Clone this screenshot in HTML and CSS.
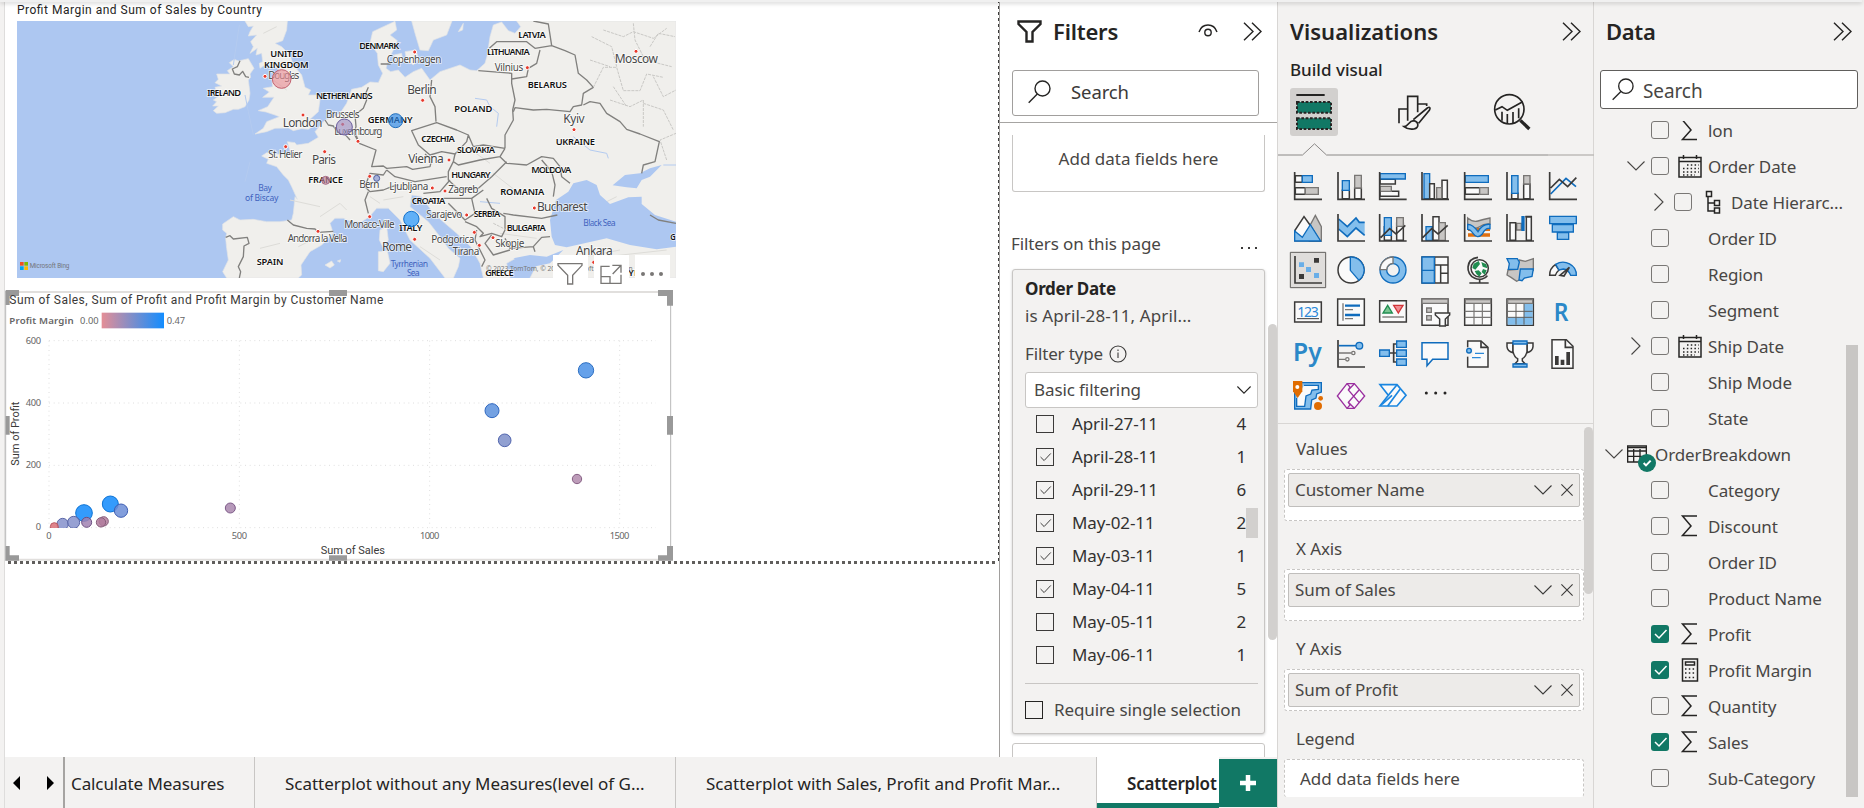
FILE: index.html
```html
<!DOCTYPE html>
<html lang="en">
<head>
<meta charset="utf-8">
<title>Report view</title>
<link rel="stylesheet" href="styles.css">
</head>
<body>
<svg class="defs" aria-hidden="true">
  <defs>
    <symbol id="chevrons" viewBox="0 0 19 19"><path d="M1 .7 10 9.5 1 18.3M9 .7 18 9.5 9 18.3"/></symbol>
    <symbol id="search" viewBox="0 0 23 24"><circle cx="14.5" cy="8.5" r="7.5"/><path d="M9.3 14 .7 22.8"/></symbol>
    <symbol id="down" viewBox="0 0 18 10"><path d="M.5.5 9 9 17.500.5"/></symbol>
    <symbol id="right" viewBox="0 0 10 18"><path d="M.5.5 9 9 .5 17.500"/></symbol>
    <symbol id="close" viewBox="0 0 12 12"><path d="M.4.4l11.200 11.200M11.600.4.4 11.600"/></symbol>
    <symbol id="sigma" viewBox="0 0 24 24"><path d="M19 2H4.500L13 12 4.500 21.500H19"/></symbol>
    <symbol id="calendar" viewBox="0 0 24 24"><path d="M1 3.500h22V23H1zM1 7.500h22M5.500 1v4M18.500 1v4"/><path class="dots" d="M9 11h12M5 14.500h16M5 18h16M5 21h12"/></symbol>
    <symbol id="hierarchy" viewBox="0 0 24 24"><path d="M5.500 1.500h5v5h-5zM13.500 10.500h5v5h-5zM13.500 18h5v5h-5zM7 7v14h6M7 13h6"/></symbol>
    <symbol id="calc" viewBox="0 0 24 24"><path d="M4.500 1h15v22h-15zM7.500 4h9v3h-9z"/><path class="dots" d="M7 11h11M7 15h11M7 19.500h11"/></symbol>
    <symbol id="tick" viewBox="0 0 18 18"><path d="M4 9l4 4 7.500-8"/></symbol>
  </defs>
</svg>
<div class="app">
  <div class="workspace">
    <div class="upper">
      <main class="canvas">
        <div class="page">
          <section class="mapvis">
            <h2><svg width="246" height="17" viewBox="0 0 246 17"><text x="0" y="12" class="vtitle dark" textLength="245">Profit Margin and Sum of Sales by Country</text></svg></h2>
            <svg class="map" width="659" height="257" viewBox="51 63 1977 771">
              <rect x="51" y="63" width="1977" height="771" fill="#adc7f1"/>
              <g fill="#f0efec" stroke="#e2e4e6" stroke-width="2">
                <path d="M650 222L690 222 682 212 700 200 688 188 703 178 715 183 745 176 762 205 750 222 752 232 745 240 750 280 747 300 735 320 715 328 700 328 675 338 650 340 640 332 655 318 638 318 650 305 640 300 658 287 672 280 650 275 645 262 665 258 645 248 655 238Z"/>
                <path d="M735 63L745 80 760 78 750 95 745 108 770 105 752 125 760 140 750 160 772 145 768 165 785 160 788 185 778 190 780 205 795 195 830 202 838 215 815 235 818 260 790 265 808 276 788 292 822 292 803 320 775 332 798 336 825 345 838 350 800 365 790 385 765 402 800 395 825 385 865 384 880 392 905 386 925 388 950 372 943 358 930 358 955 335 960 300 950 285 925 285 932 270 915 262 905 225 880 195 870 165 845 140 825 130 848 122 860 90 862 63Z"/>
                <path d="M680 834L668 815 685 780 680 745 677 715 680 700 668 690 668 672 700 650 720 660 760 658 800 665 840 665 875 660 880 640 885 590 892 598 875 560 865 540 850 525 830 500 800 490 805 478 785 468 800 458 830 462 855 465 872 460 862 425 885 428 890 435 925 430 955 412 945 395 962 375 975 360 1000 352 1020 340 1040 310 1055 268 1085 262 1110 246 1135 248 1148 220 1135 195 1132 160 1110 130 1118 95 1150 80 1185 64 1190 90 1170 105 1192 122 1180 150 1165 180 1158 205 1172 215 1195 210 1215 232 1240 215 1265 205 1290 240 1320 215 1380 195 1410 210 1430 212 1455 190 1462 165 1470 110 1480 75 1505 66 1525 92 1545 100 1562 80 1550 63 2028 63V834H1590L1610 795 1590 770 1545 776 1520 790 1530 834H1450L1440 790 1412 740 1370 700 1300 640 1265 590 1235 585 1230 620 1285 665 1320 710 1345 745 1380 775 1375 800 1360 834H1335L1290 775 1230 720 1200 660 1165 625 1130 625 1108 650 1085 665 1055 665 1030 655 1005 655 990 670 1000 700 965 735 930 755 903 795 905 825 895 834Z"/>
                <path d="M1235 63L1245 100 1260 150 1285 152 1300 120 1340 105 1356 63ZM1215 155L1248 150 1255 175 1240 195 1220 180ZM1182 165L1205 160 1208 182 1190 188ZM1375 95L1390 70 1388 90ZM1140 690L1160 680 1165 720 1150 745 1138 720ZM1135 755L1162 752 1170 790 1150 815 1135 812ZM975 795L995 783 1003 795 990 804ZM1012 783L1022 779 1020 787Z"/>
              </g>
              <g fill="none" stroke="#dddcd8" stroke-width="3">
                <path d="M895 740l60-30M780 745l60-15M870 600l90 20M960 650l60-40 20 20M1110 590l30 20M1150 600l60-10M1400 440l70 50M1480 520l90 70M1500 700l110 15M1700 780l160-30M1820 770l180-20M820 240l40 30M1790 620l60-30M1260 740l60 40M790 100l40-20"/>
              </g>
              <g fill="#adc7f1">
                <path d="M1655 710L1650 660 1668 600 1705 575 1720 550 1760 540 1790 555 1800 585 1830 612 1885 592 1925 590 1925 612 1965 645 2028 665V740L1970 748 1890 735 1820 715 1760 728 1700 742 1665 735Z"/>
                <path d="M1838 556L1875 525 1920 520 1950 505 1985 495 1950 530 1925 540 1910 565 1880 562ZM1540 775L1590 765 1640 770 1690 750 1650 790 1600 800Z"/>
              </g>
              <g class="rivers"><path d="M1425 295l35 5 10 20 25 20-5 40M1720 410l50 40 50 10 5 15M1440 605l60 5M1990 495l38 0M735 285l10 50 15 70M750 485l-15 60M718 75l-18 120"/></g>
              <g class="borders">
                <path d="M720 182L712 200 697 207 703 222 718 225 728 214 737 230 747 232M677 712L690 707 700 717 742 712 747 730 732 738 730 770 715 800 722 815 718 834M862 660L880 675 920 685 945 687 955 697 1000 694"/>
                <path d="M975 360L985 375 1000 378 1015 400 1035 403 1050 420M1105 262L1095 285 1100 300 1090 325 1065 345 1068 380 1062 400 1075 425M1068 405L1078 430 1128 450 1115 500 1150 498 1160 505 1220 500 1238 508 1290 500 1295 480 1275 462M1142 192h30M1295 240L1290 290 1305 320 1308 365M1235 392L1310 368 1370 390 1405 405 1400 425 1365 462 1325 455 1290 465 1255 435ZM1405 405L1420 440 1450 435 1515 445M1435 212L1535 220 1535 250 1545 300 1538 330 1540 360 1515 405 1515 445"/>
                <path d="M1468 145L1490 125 1580 125 1605 145 1655 137 1695 152 1725 165 1735 220 1760 240 1780 262 1750 280 1745 315 1720 320 1710 335 1640 328 1600 330 1545 323 1540 335M1620 150L1610 190 1585 205 1580 230 1535 237M1600 63L1645 72 1655 137M1750 315L1770 305 1800 310 1820 340 1860 365 1880 388 1920 402 1978 425 1965 485 1930 495 1925 520"/>
                <path d="M1515 445L1500 470 1520 490 1580 495 1625 470 1660 475 1680 500 1685 530 1710 550M1625 480L1655 515 1665 555 1660 590M1365 462L1360 485 1375 495 1440 480 1500 470M1360 485L1345 515 1345 540 1375 568 1435 565 1475 530 1520 485M1160 510L1185 530 1245 545 1340 530M1160 510L1150 525 1110 520 1095 560 1110 575 1150 570 1175 560 1195 555M1105 575L1095 600 1105 640M1270 580L1320 575 1350 540M1330 595L1415 595 1425 640 1395 660 1345 610M1415 595L1450 570M1395 665L1430 680 1450 700 1440 710 1475 700 1505 710 1515 690 1515 650 1475 625 1460 595M1510 640L1540 645 1625 655 1672 645M1475 705L1455 730 1480 765 1530 750M1430 690L1425 720 1455 780 1445 800M1515 715L1530 745 1600 740 1625 712 1650 710M1600 740L1605 755M1950 645L1975 660 2028 670"/>
                <path class="dash" d="M1480 670l50 25M1810 90l60 20 30-15 60 20 40-30M1900 70l5 50 30 60 80 20M1780 262l30-60 40 0 20 70 50 0 20-50 50 10M1850 200l-15-60-60-30M1830 300l60 20 40-20 0 80M1930 310l60 20 30 60M1770 180l60 20M1960 230l30 60 38-20M1950 140l25-40 50 10M1840 260l40 60M2000 480l-20-60 48-20"/>
              </g>
              <g fill="#e8392c" stroke="#fff" stroke-width="3">
                <circle cx="795" cy="229" r="6"/><circle cx="909" cy="345" r="6"/><circle cx="857" cy="440" r="6"/><circle cx="974" cy="455" r="6"/><circle cx="954" cy="694" r="6"/><circle cx="1028" cy="373" r="6"/><circle cx="1244" cy="156" r="6"/><circle cx="1582" cy="203" r="6"/><circle cx="1908" cy="154" r="6"/><circle cx="1268" cy="301" r="6"/><circle cx="1722" cy="389" r="6"/><circle cx="1347" cy="480" r="6"/><circle cx="1074" cy="424" r="6"/><circle cx="1109" cy="529" r="6"/><circle cx="1297" cy="564" r="6"/><circle cx="1335" cy="573" r="6"/><circle cx="1603" cy="624" r="6"/><circle cx="1400" cy="645" r="6"/><circle cx="1109" cy="650" r="6"/><circle cx="1244" cy="718" r="6"/><circle cx="1423" cy="697" r="6"/><circle cx="1438" cy="736" r="6"/><circle cx="1479" cy="713" r="6"/><circle cx="1781" cy="787" r="6"/>
              </g>
              <g class="country">
                <text x="811" y="172" textLength="100">UNITED</text><text x="792" y="203" textLength="134">KINGDOM</text><text x="622" y="288" textLength="101">IRELAND</text><text x="948" y="296" textLength="170">NETHERLANDS</text><text x="925" y="548" textLength="104">FRANCE</text><text x="770" y="794" textLength="80">SPAIN</text><text x="1078" y="147" textLength="120">DENMARK</text><text x="1555" y="114" textLength="82">LATVIA</text><text x="1461" y="166" textLength="128">LITHUANIA</text><text x="1583" y="263" textLength="118">BELARUS</text><text x="1363" y="337" textLength="114">POLAND</text><text x="1103" y="370" textLength="135">GERMANY</text><text x="1264" y="427" textLength="100">CZECHIA</text><text x="1371" y="460" textLength="114">SLOVAKIA</text><text x="1667" y="435" textLength="118">UKRAINE</text><text x="1354" y="534" textLength="118">HUNGARY</text><text x="1594" y="520" textLength="120">MOLDOVA</text><text x="1501" y="585" textLength="132">ROMANIA</text><text x="1235" y="613" textLength="101">CROATIA</text><text x="1421" y="651" textLength="80">SERBIA</text><text x="1520" y="692" textLength="117">BULGARIA</text><text x="1198" y="693" textLength="69">ITALY</text><text x="1456" y="829" textLength="85">GREECE</text><text x="2011" y="721" textLength="16" lengthAdjust="spacingAndGlyphs">G</text><text x="1885" y="829">YE</text>
              </g>
              <g class="city">
                <text x="848" y="381" textLength="119">London</text><text x="936" y="492" textLength="72">Paris</text><text x="1222" y="281" textLength="88">Berlin</text><text x="1844" y="190" textLength="130">Moscow</text><text x="1690" y="369" textLength="64">Kyiv</text><text x="1225" y="488" textLength="106">Vienna</text><text x="1611" y="632" textLength="152">Bucharest</text><text x="1146" y="752" textLength="90">Rome</text><text x="1728" y="765" textLength="110">Ankara</text>
              </g>
              <g class="town">
                <text x="805" y="236" textLength="93">Douglas</text><text x="805" y="474" textLength="102">St. Helier</text><text x="863" y="725" textLength="179">Andorra la Vella</text><text x="978" y="353" textLength="101">Brussels</text><text x="1003" y="406" textLength="144">Luxembourg</text><text x="1160" y="190" textLength="164">Copenhagen</text><text x="1484" y="212" textLength="86">Vilnius</text><text x="1078" y="563" textLength="60">Bern</text><text x="1168" y="570" textLength="117">Ljubljana</text><text x="1345" y="579" textLength="90">Zagreb</text><text x="1279" y="654" textLength="108">Sarajevo</text><text x="1033" y="683" textLength="151">Monaco-Ville</text><text x="1294" y="728" textLength="129">Podgorica</text><text x="1358" y="765" textLength="80">Tirana</text><text x="1486" y="742" textLength="87">Skopje</text>
              </g>
              <g class="sea">
                <text x="775" y="574" textLength="41">Bay</text><text x="735" y="602" textLength="100">of Biscay</text><text x="1750" y="678" textLength="97">Black Sea</text><text x="1172" y="801" textLength="112">Tyrrhenian</text><text x="1221" y="828" textLength="38">Sea</text>
              </g>
              <text class="credit" x="1458" y="812" textLength="440">© 2023 TomTom, © 2023 Microsoft Corporation</text>
              <g><rect x="60" y="786" width="11" height="11" fill="#f25022"/><rect x="73" y="786" width="11" height="11" fill="#7fba00"/><rect x="60" y="799" width="11" height="11" fill="#00a4ef"/><rect x="73" y="799" width="11" height="11" fill="#ffb900"/></g>
              <text class="bing" x="89" y="805" textLength="119">Microsoft Bing</text>
              <g stroke-width="3" fill-opacity=".65">
                <circle cx="845" cy="237" r="28" fill="#e99098" stroke="#c26270"/><circle cx="1033" cy="381" r="24" fill="#9c8fc3" stroke="#6c5e9e"/><circle cx="977" cy="541" r="12" fill="#bd7f99" stroke="#a36882"/><circle cx="1187" cy="362" r="21" fill="#2684e6" stroke="#1e6dbd"/><circle cx="1130" cy="535" r="9" fill="#8090d0" stroke="#5061a3"/><circle cx="1234" cy="657" r="23" fill="#138dff" stroke="#1572cb"/>
              </g>
            </svg>
            <div class="vis-tools">
              <span><svg width="35" height="32" viewBox="0 0 105 96"><path d="M15 26H87V31L59 61V87H44V61L15 31Z"/></svg></span>
              <span><svg width="35" height="32" viewBox="0 0 105 96"><path d="M47 34H21V85H81V59M21 65H48V85M55 31H81V53M81 31 56 57"/></svg></span>
              <span><svg width="35" height="32" viewBox="0 0 105 96"><g class="tdots"><circle cx="24" cy="57" r="6"/><circle cx="51" cy="57" r="6"/><circle cx="78" cy="57" r="6"/></g></svg></span>
            </div>
          </section>
          <section class="scatter">
            <svg width="668" height="272" viewBox="15 30 2004 816">
              <defs><linearGradient id="ramp"><stop offset="0" stop-color="#e58e96"/><stop offset="1" stop-color="#138dff"/></linearGradient></defs>
              <path d="M16 36H2013M16 839H2013" stroke="#e1dfdd" stroke-width="6" fill="none"/>
              <path d="M17 33V842M2012 33V842" stroke="#b9b9b9" stroke-width="3" fill="none"/>
              <g fill="#999">
                <path d="M17 30H57V48H29V75H17ZM987 30H1041V48H987ZM1974 30H2019V77H2001V48H1974ZM17 408H29V464H17ZM2001 408H2019V464H2001ZM17 798H29V826H57V842H17ZM987 826H1041V842H987ZM2001 798H2019V842H1974V826H2001Z"/>
              </g>
              <text class="vtitle big" x="28" y="73" textLength="1122">Sum of Sales, Sum of Profit and Profit Margin by Customer Name</text>
              <text class="lbl bold" x="28" y="132" textLength="193">Profit Margin</text>
              <text class="lbl" x="240" y="132" textLength="56">0.00</text>
              <rect x="305" y="98" width="187" height="47" fill="url(#ramp)"/>
              <text class="lbl" x="500" y="132" textLength="55">0.47</text>
              <g stroke="#dedede" stroke-width="3" stroke-dasharray="3 11" fill="none">
                <path d="M147 182H1968M147 369H1968M147 556H1968M147 743H1968M147 182V743M718 182V743M1289 182V743M1859 182V743"/>
              </g>
              <g class="lbl">
                <text x="77" y="192" textLength="46">600</text><text x="77" y="378" textLength="46">400</text><text x="77" y="564" textLength="46">200</text><text x="107" y="750">0</text>
                <text x="139" y="777">0</text><text x="695" y="777" textLength="46">500</text><text x="1260" y="777" textLength="58">1000</text><text x="1829" y="777" textLength="59">1500</text>
              </g>
              <text class="axis" x="962" y="822" textLength="193">Sum of Sales</text>
              <text class="axis" transform="translate(57 557) rotate(-90)" textLength="192">Sum of Profit</text>
              <clipPath id="plot"><rect x="147" y="160" width="1830" height="584"/></clipPath>
              <g stroke-width="3" fill-opacity=".85" clip-path="url(#plot)">
                <circle cx="1758" cy="271" r="23" fill="#4a90e6" stroke="#2b6ec2"/><circle cx="1476" cy="392" r="21" fill="#5a90dd" stroke="#2f67c0"/><circle cx="1514" cy="481" r="19" fill="#7e8fc9" stroke="#5165ad"/><circle cx="1731" cy="597" r="14" fill="#b18bad" stroke="#865f84"/>
                <circle cx="691" cy="684" r="15" fill="#a987ae" stroke="#7d5a88"/><circle cx="331" cy="672" r="24" fill="#1189fb" stroke="#0e73d4"/><circle cx="363" cy="692" r="20" fill="#6c8dd6" stroke="#3f5fb2"/><circle cx="252" cy="699" r="25" fill="#1189fb" stroke="#0e73d4"/><circle cx="188" cy="732" r="17" fill="#8590cb" stroke="#5966a8"/><circle cx="221" cy="727" r="18" fill="#8590cb" stroke="#5966a8"/><circle cx="260" cy="727" r="15" fill="#a183b1" stroke="#6d4f82"/><circle cx="311" cy="724" r="14" fill="#b5809f" stroke="#875e7b"/><circle cx="303" cy="727" r="14" fill="#b27d9e" stroke="#875e7b"/><circle cx="163" cy="740" r="12" fill="#d96f78" stroke="#ba5863"/>
              </g>
            </svg>
          </section>
        </div>
      </main>

      <aside class="filters">
        <header class="fhead">
          <svg width="25" height="23" viewBox="0 0 25 23"><path class="ink2" d="M1.500 1.500H23.500V4L15.500 12V21.500H9.500V12L1.500 4Z"/></svg>
          <h1>Filters</h1>
          <svg class="eye ink" width="20" height="13" viewBox="0 0 20 13"><path d="M1 8C2.500 3.500 6 1 10 1S17.500 3.500 19 8"/><circle cx="10" cy="8.500" r="3.200"/></svg>
          <svg class="ink" width="19" height="19"><use href="#chevrons"/></svg>
        </header>
        <div class="fsearch"><svg class="ink" width="23" height="24"><use href="#search"/></svg><span>Search</span></div>
        <div class="fbody">
          <div class="addbox">Add data fields here</div>
          <div class="fsection"><span>Filters on this page</span><i class="more3"></i></div>
          <div class="card">
            <b class="cname">Order Date</b>
            <div class="csum">is April-28-11, April...</div>
            <div class="ctype"><span>Filter type</span><svg width="18" height="18" viewBox="0 0 18 18"><circle cx="9" cy="9" r="8"/><path d="M9 7.500V13M9 4.500V6"/></svg></div>
            <div class="select"><span>Basic filtering</span><svg class="ink" width="14" height="8"><use href="#down"/></svg></div>
            <div class="options">
              <div class="opt"><i class="box"></i><span>April-27-11</span><em>4</em></div>
              <div class="opt"><i class="box"><svg width="16" height="16"><use href="#tick"/></svg></i><span>April-28-11</span><em>1</em></div>
              <div class="opt"><i class="box"><svg width="16" height="16"><use href="#tick"/></svg></i><span>April-29-11</span><em>6</em></div>
              <div class="opt"><i class="box"><svg width="16" height="16"><use href="#tick"/></svg></i><span>May-02-11</span><em>2</em></div>
              <div class="opt"><i class="box"><svg width="16" height="16"><use href="#tick"/></svg></i><span>May-03-11</span><em>1</em></div>
              <div class="opt"><i class="box"><svg width="16" height="16"><use href="#tick"/></svg></i><span>May-04-11</span><em>5</em></div>
              <div class="opt"><i class="box"></i><span>May-05-11</span><em>2</em></div>
              <div class="opt"><i class="box"></i><span>May-06-11</span><em>1</em></div>
              <div class="optthumb"></div>
            </div>
            <div class="single"><i class="box strong"></i><span>Require single selection</span></div>
          </div>
          <div class="nextcard"></div>
          <div class="fthumb"></div>
        </div>
      </aside>
    </div>
    <nav class="tabs">
      <div class="arrows"><svg width="59" height="20" viewBox="0 0 59 20"><path d="M15 3V17L8 10ZM42 3V17L49 10Z"/></svg></div>
      <div class="tab t1">Calculate Measures</div>
      <div class="tab t2">Scatterplot without any Measures(level of G...</div>
      <div class="tab t3">Scatterplot with Sales, Profit and Profit Mar...</div>
      <div class="tab active">Scatterplot</div>
      <div class="plus"><svg width="18" height="18" viewBox="0 0 18 18"><path d="M9 1V17M1 9H17"/></svg></div>
    </nav>
  </div>

  <aside class="viz">
    <header class="vhead"><h1>Visualizations</h1><svg class="ink" width="19" height="19"><use href="#chevrons"/></svg></header>
    <h3>Build visual</h3>
    <div class="modes">
      <div class="mode on"><svg width="48" height="48" viewBox="42 264 144 144"><path d="M61 285H146" stroke="#252423" stroke-width="6"/><g fill="#117865" stroke="#252423" stroke-width="6"><path d="M63 306H165V338H63ZM63 355H165V387H63Z" stroke="#d2d0ce"/><path d="M63 306H165V338H63ZM63 355H165V387H63Z" stroke-dasharray="8 5"/></g></svg></div>
      <div class="mode"><svg width="48" height="48" viewBox="340 264 144 144" fill="none" stroke="#252423" stroke-width="5"><path d="M370 370V327H396M396 362V289H426V337M426 312H453V318M385 380C398 380 398 363 414 362 430 365 431 384 415 387 400 389 391 385 385 380ZM413 359 455 324C463 319 465 324 461 331L429 370"/></svg></div>
      <div class="mode"><svg width="48" height="48" viewBox="636 264 144 144" fill="none" stroke="#252423" stroke-width="5"><circle cx="700" cy="328" r="44"/><path d="M658 330 678 320 694 331 740 305M678 335V362M694 342V370M711 336V370M728 325V355"/><path d="M733 361 760 387" stroke-width="10"/></svg></div>
    </div>
    <svg class="notch" width="316" height="14" viewBox="0 0 316 14"><path d="M0 12H24.500L36.500 .8 48.500 12H270" stroke="#8a8886"/><path d="M270 12H316" stroke="#bebbb8" stroke-width="1.600"/></svg>
    <div class="gallery">
      <svg viewBox="54 36 84 84"><path class="w" d="M58 47H79V67H58ZM58 83H88V103H58Z"/><path class="b" d="M79 47H109V67H79Z"/><path class="g" d="M88 83H127V103H88Z"/><path class="k" d="M56 36V118H138"/></svg>
      <svg viewBox="183 36 84 84"><path class="w" d="M199 91H220V116H199ZM236 84H256V116H236Z"/><path class="b" d="M199 62H220V91H199Z"/><path class="g" d="M236 46H256V84H236Z"/><path class="k" d="M186 36V118H267"/></svg>
      <svg viewBox="309 36 84 84"><path class="w" d="M312 58H358V72H312ZM312 94H368V109H312Z"/><path class="g" d="M312 79H346V94H312Z"/><path class="b" d="M312 41H388V57H312Z"/><path class="k" d="M311 36V118H392"/></svg>
      <svg viewBox="435 36 84 84"><path class="b" d="M444 41H461V116H444Z"/><path class="w" d="M461 71H475V116H461ZM498 61H514V116H498Z"/><path class="g" d="M482 83H497V116H482Z"/><path class="k" d="M438 36V118H519"/></svg>
      <svg viewBox="564 36 84 84"><path class="w" d="M568 83H611V103H568Z"/><path class="b" d="M568 47H637V67H568Z"/><path class="g" d="M611 83H637V103H611Z"/><path class="k" d="M566 36V118H648"/></svg>
      <svg viewBox="690 36 84 84"><path class="w" d="M707 100H726V116H707ZM743 72H762V116H743Z"/><path class="b" d="M707 47H726V100H707Z"/><path class="g" d="M743 47H762V72H743Z"/><path class="k" d="M693 36V118H774"/></svg>
      <svg viewBox="819 36 84 84"><path class="bl" d="M824 102 870 55 900 80"/><path class="k" d="M824 84 850 58 875 80 901 53M821 36V118H903"/></svg>

      <svg viewBox="54 162 84 84"><path class="g" d="M118 166 136 200V243H100V200Z"/><path class="w" d="M84 170 57 211V242H131L102 195Z"/><path class="b" d="M56 213 79 232 103 194 134 243H56Z"/></svg>
      <svg viewBox="183 162 84 84"><path d="M188 177 214 200 240 174 250 187H266V224L240 204 214 230 188 207Z" fill="#83beec"/><path class="bl" d="M188 177 214 200 240 174 250 187H266M188 207 214 230 240 204 266 226"/><path class="k" d="M186 162V243H267"/></svg>
      <svg viewBox="309 162 84 84"><path class="w" d="M325 200H346V241H325ZM362 190H382V241H362Z"/><path class="b" d="M325 173H346V226H325Z"/><path class="g" d="M362 173H382V199H362Z"/><path class="k" d="M311 162V243H392M314 233 341 206 360 222 388 196"/></svg>
      <svg viewBox="435 162 84 84"><path class="b" d="M450 200H469V241H450Z"/><path class="w" d="M471 170H489V241H471Z"/><path class="g" d="M489 188H508V241H489Z"/><path class="k" d="M438 162V243H519M440 233 467 206 486 222 515 196"/></svg>
      <svg viewBox="564 162 84 84"><path d="M576 208H642M576 225H642" stroke="#e07010" stroke-width="10"/><path class="g" d="M575 174Q592 188 606 183T642 174V192Q625 190 609 201T575 192Z"/><path class="b" d="M575 193Q590 192 606 215 620 190 642 193V206Q629 202 619 222 604 239 591 220 583 208 575 208Z"/><path class="k" d="M566 162V243H648"/></svg>
      <svg viewBox="690 162 84 84"><path class="g" d="M722 190H736V210H722Z"/><path class="w" d="M702 188H719V241H702ZM751 170H766V241H751Z"/><path d="M736 168H746V213H736Z" fill="#0f6cbd"/><path class="k" d="M748 170H768M693 162V243H774"/></svg>
      <svg viewBox="819 162 84 84"><path class="b" d="M821 169H901V191H821ZM829 194H892V216H829ZM844 218H878V238H844Z"/></svg>

      <svg class="picked" viewBox="54 288 84 84"><path d="M43 277H149V383H43Z" fill="#dfdddb" stroke="#605e5c" stroke-width="3"/><path class="k" d="M57 288V369H138"/><path fill="#3b3a39" d="M114 294H129V308H114ZM69 342H84V357H69Z"/><path fill="#69aee8" d="M69 307H84V321H69ZM90 321H105V336H90ZM114 339H129V354H114Z"/></svg>
      <svg viewBox="183 288 84 84"><circle class="w" cx="225" cy="330" r="39"/><path class="b" d="M223 291A39 39 0 0 1 249 361L223 331Z"/></svg>
      <svg viewBox="309 288 84 84"><circle cx="351" cy="330" r="29" fill="none" stroke="#0f6cbd" stroke-width="24"/><circle cx="351" cy="330" r="29" fill="none" stroke="#83beec" stroke-width="16"/><path d="M312 329A39 39 0 0 1 351 291V310A20 20 0 0 0 332 329Z" fill="#fafafa" stroke="#797775" stroke-width="4"/></svg>
      <svg viewBox="435 288 84 84"><path class="w" d="M438 291H516V369H438ZM476 291V369M476 315H516M494 315V369M494 340H516"/><path class="b" d="M438 291H475V369H438ZM438 331H475"/></svg>
      <svg viewBox="564 288 84 84"><circle class="w" cx="611" cy="325" r="26"/><path fill="#218d51" d="M593 311 608 303 612 312 598 329 589 324ZM616 306 631 313 634 325 620 320ZM596 333 608 331 617 340 610 350 601 342ZM621 327 632 331 626 344 617 336Z"/><path class="k" d="M606 292C568 296 568 343 595 354 611 362 629 356 634 347M611 359V367M580 369H638"/></svg>
      <svg viewBox="690 288 84 84"><path class="g" d="M730 300 748 304 772 296V331L752 350 730 360 722 364 705 352 693 345 696 330 722 328Z"/><path class="b" d="M693 296H724L730 306 725 328H697L700 311ZM733 327H772L768 349 745 354 738 362 729 360Z"/></svg>
      <svg viewBox="819 288 84 84"><path class="w" d="M821 346A40 38 0 0 1 838 314L849 330Q840 338 838 346Z"/><path class="b" d="M839 313A40 38 0 0 1 901 346H884Q877 328 862 327L849 330Z"/><path d="M852 346 880 322 864 348Z" class="k"/></svg>

      <svg viewBox="54 414 84 84"><path class="w" d="M56 426H136V486H56Z"/><text x="64" y="470" textLength="64" class="num">123</text><path d="M63 476H129" stroke="#3b3a39" stroke-width="3"/></svg>
      <svg viewBox="183 414 84 84"><path class="w" d="M185 417H265V496H185Z"/><path d="M201 430V482M207 449H231M207 476H231" stroke="#797775" stroke-width="4"/><path d="M207 437H252M207 465H252" stroke="#0f6cbd" stroke-width="7"/></svg>
      <svg viewBox="309 414 84 84"><path class="w" d="M311 422H391V486H311Z"/><path d="M335 436 349 459H321Z" fill="#7ac591" stroke="#218d51" stroke-width="4"/><path d="M353 436H381L367 459Z" fill="#f08c92" stroke="#d13438" stroke-width="4"/><path d="M319 471H384" stroke="#797775" stroke-width="4"/></svg>
      <svg viewBox="435 414 84 84"><path class="w" d="M438 417H516V496H438Z"/><path class="g" d="M438 417H516V430H438ZM452 444H466V457H452ZM452 467H466V480H452Z"/><path class="w" d="M478 459H521V465L508 477V498H491V477L478 465Z"/></svg>
      <svg viewBox="564 414 84 84"><path class="w" d="M566 417H646V496H566Z"/><path d="M566 454H646M566 472H646M594 431V496M619 431V496" fill="none" stroke="#797775" stroke-width="3.500"/><path class="g" d="M568 419H644V430H568Z"/></svg>
      <svg viewBox="690 414 84 84"><path class="w" d="M693 417H772V496H693Z"/><path fill="#83beec" d="M744 431H770V494H695V472H744Z"/><path d="M695 454H770M695 472H770M720 431V494M744 431V494" fill="none" stroke="#605e5c" stroke-width="3"/><path class="g" d="M695 419H770V430H695Z"/></svg>
      <svg viewBox="819 414 84 84"><text class="rp" x="833" y="482" textLength="44" lengthAdjust="spacingAndGlyphs">R</text></svg>

      <svg viewBox="54 540 84 84"><text class="rp" x="51" y="603" textLength="86" lengthAdjust="spacingAndGlyphs">Py</text></svg>
      <svg viewBox="183 540 84 84"><path class="k" d="M186 540V621H267"/><path d="M189 557H240" stroke="#0f6cbd" stroke-width="5"/><circle class="b" cx="250" cy="557" r="10"/><g fill="#fafafa" stroke="#797775" stroke-width="4"><path d="M189 579H226M189 598H208"/><circle cx="232" cy="579" r="5"/><circle cx="214" cy="598" r="5"/></g></svg>
      <svg viewBox="309 540 84 84"><path class="k" d="M342 579H362M362 552H353V606H362"/><path class="b" d="M311 570H340V589H311ZM362 543H391V562H362ZM362 570H391V589H362ZM362 597H391V616H362Z"/></svg>
      <svg viewBox="435 540 84 84"><path class="bubble" d="M438 548H516V598H470L453 617V598H438Z"/></svg>
      <svg viewBox="564 540 84 84"><path class="w" d="M575 543H615L636 562V621H575Z"/><path class="k" d="M615 543V562H636"/><path d="M568 562H590V590H568Z" fill="#f3f2f1"/><circle class="b" cx="579" cy="572" r="7"/><path d="M597 580H624M588 593H614" stroke="#2b88d8" stroke-width="4"/></svg>
      <svg viewBox="690 540 84 84"><path class="w" d="M711 549H693V560Q694 574 711 578ZM753 549H771V560Q770 574 753 578Z"/><path class="w" d="M711 548H753V575Q749 592 739 596V603L747 611H717L725 603V596Q715 592 711 575Z"/><path class="b" d="M711 543H753V552H711ZM711 612H753V621H711Z"/></svg>
      <svg viewBox="819 540 84 84"><path class="w" d="M828 539H871L891 559V625H828Z"/><path class="k" d="M868 540V562H891"/><path fill="#3b3a39" d="M837 588H848V615H837ZM854 599H865V615H854ZM871 576H882V615H871Z"/></svg>

      <svg viewBox="54 666 84 84"><path class="b" d="M56 668H136V696L122 702 120 714 107 720 104 747H56Z"/><path d="M84 676H127V688L108 690 104 702 90 708 86 739H62V714" fill="#fafafa" stroke="#0f6cbd" stroke-width="4"/><path d="M51 663H79V694L65 714 51 694Z" fill="#e06c00"/><circle cx="64" cy="681" r="6" fill="#fff"/><circle cx="126" cy="738" r="18" fill="#f3f2f1"/><circle cx="126" cy="738" r="12" fill="#e06c00"/><circle cx="134" cy="715" r="7" fill="#e06c00"/></svg>
      <svg viewBox="183 666 84 84" fill="#fafafa" stroke="#9a2f9f" stroke-width="4"><path d="M213 671H235L266 708 235 745H213L184 708Z"/><path fill="none" d="M213 671 222 681 217 690 249 727M235 671 217 690M249 690 217 727 222 735 213 745M217 727 235 745"/></svg>
      <svg viewBox="309 666 84 84" fill="#fafafa" stroke="#1a86e0" stroke-width="5"><path d="M312 674H363L390 706 363 738H312L337 706Z"/><path d="M337 706 363 674M318 733 348 706M335 738 372 688" fill="none"/></svg>
      <svg viewBox="435 666 84 84"><g fill="#252423"><circle cx="451" cy="699" r="4.500"/><circle cx="479" cy="699" r="4.500"/><circle cx="507" cy="699" r="4.500"/></g></svg>
    </div>
    <div class="wells">
      <h4>Values</h4>
      <div class="well"><div class="pill"><span>Customer Name</span><svg width="18" height="10"><use href="#down"/></svg><svg width="12" height="12"><use href="#close"/></svg></div></div>
      <h4>X Axis</h4>
      <div class="well"><div class="pill"><span>Sum of Sales</span><svg width="18" height="10"><use href="#down"/></svg><svg width="12" height="12"><use href="#close"/></svg></div></div>
      <h4>Y Axis</h4>
      <div class="well short"><div class="pill"><span>Sum of Profit</span><svg width="18" height="10"><use href="#down"/></svg><svg width="12" height="12"><use href="#close"/></svg></div></div>
      <h4 class="leg">Legend</h4>
      <div class="well open">Add data fields here</div>
      <div class="vthumb"></div>
    </div>
  </aside>

  <aside class="data">
    <header class="dhead"><h1>Data</h1><svg class="ink" width="19" height="19"><use href="#chevrons"/></svg></header>
    <div class="dsearch"><svg class="ink" width="22" height="23"><use href="#search"/></svg><span>Search</span></div>
    <div class="tree">
      <div class="row"><i class="exp"></i><i class="cb"></i><svg class="ic clipped"><use href="#sigma"/></svg><span>lon</span></div>
      <div class="row"><i class="exp"><svg width="18" height="10"><use href="#down"/></svg></i><i class="cb"></i><svg class="ic"><use href="#calendar"/></svg><span>Order Date</span></div>
      <div class="row sub"><i class="exp"><svg width="10" height="18"><use href="#right"/></svg></i><i class="cb"></i><svg class="ic"><use href="#hierarchy"/></svg><span>Date Hierarc...</span></div>
      <div class="row"><i class="exp"></i><i class="cb"></i><i class="ic"></i><span>Order ID</span></div>
      <div class="row"><i class="exp"></i><i class="cb"></i><i class="ic"></i><span>Region</span></div>
      <div class="row"><i class="exp"></i><i class="cb"></i><i class="ic"></i><span>Segment</span></div>
      <div class="row"><i class="exp"><svg width="10" height="18"><use href="#right"/></svg></i><i class="cb"></i><svg class="ic"><use href="#calendar"/></svg><span>Ship Date</span></div>
      <div class="row"><i class="exp"></i><i class="cb"></i><i class="ic"></i><span>Ship Mode</span></div>
      <div class="row"><i class="exp"></i><i class="cb"></i><i class="ic"></i><span>State</span></div>
      <div class="row table"><svg width="18" height="10"><use href="#down"/></svg><svg class="ticon" width="30" height="27" viewBox="0 0 90 81"><path d="M2 3H58V51H2ZM2 8H58M2 18H58M2 34H58M20 12V51M39 12V51" fill="none" stroke="#252423" stroke-width="4"/><circle cx="60" cy="54" r="27" fill="#117865"/><path d="M50 54 57 61 71 47" fill="none" stroke="#fff" stroke-width="6"/></svg><span>OrderBreakdown</span></div>
      <div class="row"><i class="exp"></i><i class="cb"></i><i class="ic"></i><span>Category</span></div>
      <div class="row"><i class="exp"></i><i class="cb"></i><svg class="ic"><use href="#sigma"/></svg><span>Discount</span></div>
      <div class="row"><i class="exp"></i><i class="cb"></i><i class="ic"></i><span>Order ID</span></div>
      <div class="row"><i class="exp"></i><i class="cb"></i><i class="ic"></i><span>Product Name</span></div>
      <div class="row"><i class="exp"></i><i class="cb on"><svg width="18" height="18"><use href="#tick"/></svg></i><svg class="ic"><use href="#sigma"/></svg><span>Profit</span></div>
      <div class="row"><i class="exp"></i><i class="cb on"><svg width="18" height="18"><use href="#tick"/></svg></i><svg class="ic"><use href="#calc"/></svg><span>Profit Margin</span></div>
      <div class="row"><i class="exp"></i><i class="cb"></i><svg class="ic"><use href="#sigma"/></svg><span>Quantity</span></div>
      <div class="row"><i class="exp"></i><i class="cb on"><svg width="18" height="18"><use href="#tick"/></svg></i><svg class="ic"><use href="#sigma"/></svg><span>Sales</span></div>
      <div class="row"><i class="exp"></i><i class="cb"></i><i class="ic"></i><span>Sub-Category</span></div>
      <div class="dthumb"></div>
    </div>
  </aside>
  <div class="topshade"></div>
</div>
</body>
</html>
```
FILE: styles.css
```css
* { box-sizing: border-box; }
body { margin: 0; font: 17px/24px "Noto Sans", "Open Sans", sans-serif; color: #484644; letter-spacing: -.1px; }
h1, h2, h3, h4 { margin: 0; font-weight: 600; color: #252423; }
i, em { font-style: normal; }
svg { display: block; flex: none; }
svg text { letter-spacing: 0; }
.defs { position: absolute; width: 0; height: 0; }
.app { position: relative; display: flex; width: 1864px; height: 808px; overflow: hidden; background: #f3f2f1; }
.topshade { position: absolute; left: 0; top: 0; width: 1862px; height: 2px; background: #f0f0f0; box-shadow: 0 1px 4px rgba(0,0,0,.28); }
.ink { fill: none; stroke: #252423; stroke-width: 1.4; }
.ink2 { fill: none; stroke: #252423; stroke-width: 2.4; }

.workspace { width: 1277px; display: flex; flex-direction: column; }
.upper { display: flex; height: 757px; }
.canvas { width: 999px; padding-left: 4px; background: #fff; border-left: 4px solid #f3f2f1; box-shadow: inset 1px 0 #dedddc; }
.page { height: 565px; padding: 2px 0 0 0; width: 991px; background:
  repeating-linear-gradient(90deg, #605e5c 0 3px, transparent 3px 6px) 0 561px / 990px 3px no-repeat,
  repeating-linear-gradient(#3b3a39 0 3px, transparent 3px 6px) 990px 0 / 1px 564px no-repeat; }
.mapvis { position: relative; padding-left: 9px; height: 288px; }
.mapvis h2 { height: 19px; }
.vtitle { font: 12px Roboto, sans-serif; fill: #3b3a39; }
.vtitle.dark { fill: #252423; }
.vtitle.big { font-size: 36px; }
.map { overflow: hidden; }
.borders { fill: none; stroke: #81807e; stroke-width: 4; stroke-linejoin: round; }
.borders .dash { stroke: #c9c8c5; stroke-width: 3; stroke-dasharray: 9 3; }
.rivers { fill: none; stroke: #b4cbf0; stroke-width: 3; }
.country, .city, .town, .sea { paint-order: stroke; stroke: #fff; stroke-opacity: .7; stroke-width: 5; }
.country { font: 600 28px "Noto Sans", sans-serif; fill: #111; }
.city { font: 36px "Noto Sans", sans-serif; fill: #484848; }
.town { font: 30px "Noto Sans", sans-serif; fill: #484848; }
.sea { font: 26px "Noto Sans", sans-serif; fill: #3f62bd; stroke: #adc7f1; }
.credit { font: 20px "Noto Sans", sans-serif; fill: #777; }
.bing { font: 19px Roboto, sans-serif; fill: #72757c; }
.vis-tools { position: absolute; left: 545px; top: 253px; display: flex; gap: 6px; }
.vis-tools span { background: linear-gradient(#fff, #fff) 0 0 / 35px 23px no-repeat; }
.vis-tools path { fill: none; stroke: #797775; stroke-width: 4; }
.tdots { fill: #797775; }
.scatter { margin-left: -3px; }
.lbl { font: 28px "Noto Sans", sans-serif; fill: #666; }
.lbl.bold { font-size: 29px; font-weight: 600; }
.axis { font: 33px Roboto, sans-serif; fill: #3b3a39; }

.filters { width: 278px; background: #fff; border-left: 1px solid #a19f9d; padding: 0 0 0 12px; overflow: hidden; }
.fhead { display: flex; align-items: center; height: 62px; padding: 0 15px 0 5px; }
.fhead h1 { margin-left: 11px; flex: 1; letter-spacing: -.2px; }
h1 { font-size: 22px; letter-spacing: -.3px; }
.eye { margin-right: 25px; margin-top: -2px; }
.fsearch { display: flex; align-items: center; width: 247px; height: 46px; margin-top: 8px; padding: 0 0 2px 15px; gap: 20px; border: 1px solid #a19f9d; border-radius: 3px; color: #3b3a39; font-size: 18.5px; }
.fbody { position: relative; margin: 6px 0 0 -12px; padding: 12px 0 0 12px; height: 635px; border-top: 1px solid #a6a4a2; }
.addbox { width: 253px; height: 57px; border: 1px solid #c8c6c4; border-top: 0; border-radius: 0 0 3px 3px; padding-top: 12px; text-align: center; letter-spacing: 0; }
.fsection { display: flex; justify-content: space-between; align-items: center; height: 24px; margin: 40px 19px 0 -1px; }
.more3 { width: 17px; height: 2px; margin-top: 8px; background: repeating-linear-gradient(90deg, #3b3a39 0 2px, transparent 2px 7px); }
.card { width: 253px; height: 465px; margin-top: 13px; padding: 7px 6px 0 12px; background: #f3f2f1; border: 1px solid #c8c6c4; border-radius: 3px; box-shadow: 0 1px 3px rgba(0,0,0,.2); }
.cname { display: block; color: #252423; font-weight: 700; letter-spacing: -.3px; }
.csum { margin-top: 3px; letter-spacing: .12px; }
.ctype { display: flex; align-items: center; gap: 6px; margin-top: 13px; height: 25px; letter-spacing: -.15px; }
.ctype svg { fill: none; stroke: #3b3a39; stroke-width: 1.1; }
.select { display: flex; align-items: center; justify-content: space-between; height: 36px; margin-top: 6px; padding: 0 6px 0 8px; background: #fff; border: 1px solid #c8c6c4; border-radius: 3px; }
.options { position: relative; top: -1px; height: 277px; padding-left: 11px; border-bottom: 1px solid #c8c6c4; }
.opt { display: flex; align-items: center; height: 33px; padding-right: 12px; }
.opt span { flex: 1; margin-left: 18px; }
.opt span, .opt em { color: #323130; }
.box { width: 18px; height: 18px; border: 1px solid #3b3a39; flex: none; }
.box svg { fill: none; stroke: #3b3a39; stroke-width: 1.1; }
.box.strong { border-width: 1.500px; border-color: #252423; }
.optthumb { position: absolute; right: 0; top: 101px; width: 12px; height: 30px; background: #d2d0ce; }
.single { display: flex; align-items: center; height: 49px; gap: 11px; }
.nextcard { width: 253px; height: 30px; margin-top: 9px; border: 1px solid #c8c6c4; border-radius: 3px; }
.fthumb { position: absolute; right: 0; top: 201px; width: 9px; height: 316px; border-radius: 5px; background: #d2d0ce; }

.tabs { position: relative; display: flex; height: 51px; margin-left: 4px; width: 1273px; background: #f3f2f1; color: #252423; line-height: 53px; white-space: nowrap; border-left: 1px solid #dedddc; }
.arrows { width: 60px; padding-top: 16px; border-right: 2px solid #a6a4a2; }
.tab { border-right: 1px solid #c8c6c4; overflow: hidden; }
.t1 { width: 190px; padding-left: 6px; }
.t2 { width: 421px; padding-left: 30px; letter-spacing: -.02px; }
.t3 { width: 421px; padding-left: 30px; letter-spacing: 0; }
.active { width: 122px; padding-left: 30px; border-right: 0; background: #fff; border-bottom: 5px solid #117865; font-weight: 600; letter-spacing: -.2px; }
.plus { display: grid; place-items: center; width: 58px; height: 48px; margin-top: 2px; background: #117865; }
.plus path { stroke: #fff; stroke-width: 4.500; }

.viz { width: 317px; border-left: 1px solid #d8d6d4; border-right: 1px solid #d8d6d4; }
.vhead, .dhead { display: flex; align-items: center; justify-content: space-between; height: 62px; padding: 0 12px; }
.vhead h1 { letter-spacing: .05px; }
h3 { margin: -4px 0 0 12px; font-size: 17px; line-height: 24px; font-weight: 500; letter-spacing: 0; }
.modes { display: flex; margin: 6px 0 0 12px; gap: 51px; }
.mode { border-radius: 3px; }
.mode.on { background: #d2d0ce; }
.notch { margin-top: 7px; fill: none; }
.gallery { display: grid; grid-template-columns: 43px 42px 42px 43px 42px 43px 28px; grid-auto-rows: 28px; row-gap: 14px; height: 267px; padding: 15px 0 0 16px; border-bottom: 1px solid #d8d6d4; }
.gallery svg { width: 28px; height: 28px; overflow: visible; }
.k { fill: none; stroke: #3b3a39; stroke-width: 5; }
.w { fill: #fafafa; stroke: #3b3a39; stroke-width: 4.500; }
.g { fill: #c8c6c4; stroke: #797775; stroke-width: 4; }
.b { fill: #83beec; stroke: #0f6cbd; stroke-width: 4; }
.bl { fill: none; stroke: #0f6cbd; stroke-width: 5; }
.bubble { fill: #fafafa; stroke: #0f6cbd; stroke-width: 4.500; }
.num { font: 42px "Noto Sans", sans-serif; fill: #2b88d8; }
.rp { font: 600 74px "Noto Sans", sans-serif; fill: #2b88c8; }
.wells { position: relative; height: 373px; padding: 13px 9px 0 6px; overflow: hidden; }
h4 { height: 24px; margin-left: 12px; font-size: 17px; font-weight: 400; color: #484644; }
.well { height: 52px; margin: 8px 0 16px; padding: 3px; background: #fff; border: 1px dashed #c8c6c4; border-radius: 3px; }
.well.short { height: 42px; margin-bottom: 16px; }
.well.open { height: 38px; border-bottom: 0; padding: 7px 0 0 15px; margin-bottom: 0; letter-spacing: 0; }
.pill { display: flex; align-items: center; height: 34px; padding: 0 6px; background: #edebe9; border: 1px solid #c0bebc; border-radius: 2px; }
.pill span { flex: 1; }
.pill svg { margin-left: 9px; fill: none; stroke: #3b3a39; stroke-width: 1.1; }
.vthumb { position: absolute; right: 0; top: 3px; width: 9px; height: 167px; border-radius: 5px; background: #d2d0ce; }

.data { width: 270px; }
.dhead { padding: 0 12px 0 12px; }
.dsearch { display: flex; align-items: center; width: 258px; height: 39px; margin: 8px 0 0 6px; padding-left: 11px; gap: 9px; background: #fff; border: 1px solid #605e5c; border-radius: 3px; font-size: 19px; }
.dsearch span { padding-top: 3px; }
.dsearch svg { margin-top: -1px; }
.tree { position: relative; padding-top: 3px; }
.row { display: flex; align-items: center; height: 36px; padding-left: 33px; }
.row.sub { padding-left: 56px; }
.row.table { padding-left: 11px; }
.row span { padding-top: 2px; }
.exp { width: 18px; margin-right: 6px; display: grid; place-items: center; flex: none; }
.exp svg, .table > svg:first-child { fill: none; stroke: #484644; stroke-width: 1.1; }
.cb { width: 18px; height: 18px; flex: none; border: 1px solid #797775; border-radius: 3px; }
.cb.on { border: 0; background: #117865; }
.cb.on svg { fill: none; stroke: #fff; stroke-width: 1.500; }
.ic { width: 24px; height: 24px; margin: 0 6px 0 9px; flex: none; fill: none; stroke: #252423; stroke-width: 1.500; }
.ic.clipped { clip-path: inset(3px 0 0 0); }
.dots { stroke-dasharray: 1.500 2.300; }
.ticon { margin: 9px 0 0 4px; }
.table span { margin-left: -2px; }
.dthumb { position: absolute; left: 252px; top: 236px; width: 12px; height: 452px; background: #c8c6c4; }
```
